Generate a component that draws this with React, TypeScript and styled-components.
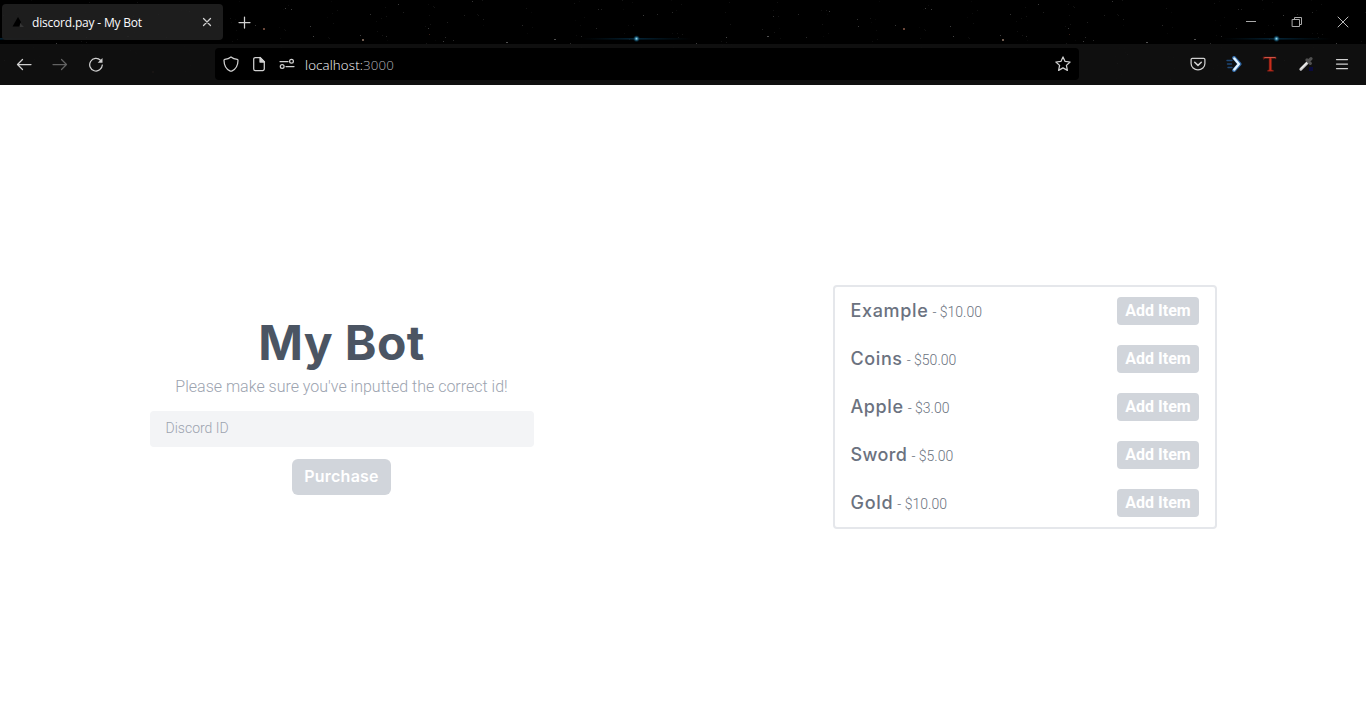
import React from "react";
import styled, { createGlobalStyle } from "styled-components";

const GlobalStyle = createGlobalStyle`
  *, *::before, *::after { box-sizing: border-box; }
  body { margin: 0; background: #fff; font-family: Roboto, sans-serif; }
  h1, p { margin: 0; font-weight: inherit; }
  button, input { font: inherit; border: 0; }
`;

const Window = styled.div`
  display: flex;
  flex-direction: column;
  width: 1366px;
  height: 727px;
  overflow: hidden;
`;

const Chrome = styled.header`
  position: relative;
  flex: none;
  height: 85px;
  background: #000;
  color: #e8e8e8;
  font-family: "Open Sans", "Noto Sans", sans-serif;
`;

const Sky = styled.svg`
  position: absolute;
  inset: 0;
  display: block;
`;

const TabStrip = styled.div`
  position: relative;
  display: flex;
  align-items: center;
  height: 44px;
  padding-left: 2px;
`;

const Tab = styled.div`
  display: flex;
  align-items: center;
  width: 221px;
  height: 36px;
  padding: 0 8px;
  border-radius: 4px;
  background: rgba(31, 31, 31, 0.92);
`;

const TabTitle = styled.span`
  flex: 1;
  margin-left: 6px;
  padding-top: 2px;
  font-size: 12px;
  line-height: 18px;
  letter-spacing: -0.19px;
  color: #fbfbfe;
  white-space: nowrap;
`;

const NewTab = styled.div`
  display: flex;
  margin-left: 13px;
`;

const WindowControls = styled.div`
  display: flex;
  gap: 30px;
  margin-left: auto;
  padding-right: 15px;
`;

const Toolbar = styled.div`
  position: relative;
  display: flex;
  align-items: center;
  height: 41px;
  padding-bottom: 1px;
  background: rgba(17, 17, 17, 0.88);
`;

const NavButtons = styled.div`
  display: flex;
  gap: 20px;
  width: 215px;
  padding-left: 16px;
`;

const AddressBar = styled.div`
  display: flex;
  align-items: center;
  gap: 12px;
  width: 864px;
  height: 32px;
  padding: 0 8px;
  border-radius: 4px;
  background: #000;
`;

const Address = styled.span`
  flex: 1;
  margin-left: -2px;
  padding-top: 1px;
  font-size: 13.3px;
  font-weight: 300;
  line-height: 18px;
  letter-spacing: 0.14px;
  color: #fbfbfe;
`;

const Port = styled.span`
  color: #b3b3b8;
`;

const Extensions = styled.div`
  display: flex;
  gap: 20px;
  margin-left: auto;
  padding-right: 16px;
`;

const Icon = styled.svg<{ $dim?: boolean }>`
  display: block;
  flex: none;
  fill: none;
  stroke: ${(p) => (p.$dim ? "#626262" : "#d0d0d0")};
  stroke-width: 1.25;
  stroke-linecap: round;
  stroke-linejoin: round;
`;

const Page = styled.main`
  display: grid;
  grid-template-columns: 1fr 1fr;
  align-items: center;
  justify-items: center;
  flex: 1;
`;

const Checkout = styled.section`
  display: flex;
  flex-direction: column;
  align-items: center;
  width: 384px;
  margin-top: 1px;
`;

const Title = styled.h1`
  font-family: Inter, sans-serif;
  font-size: 48px;
  font-weight: 700;
  line-height: 48px;
  letter-spacing: 0.4px;
  color: #4b5563;
  white-space: nowrap;
`;

const Hint = styled.p`
  margin-top: 8px;
  font-size: 16px;
  font-weight: 300;
  line-height: 24px;
  color: #9ca3af;
`;

const IdInput = styled.input`
  width: 384px;
  height: 36px;
  margin-top: 12px;
  padding: 0 16px 1px;
  border-radius: 4px;
  background: #f3f4f6;
  font-size: 14px;
  font-weight: 300;
  color: #4b5563;
  &::placeholder { color: #9ca3af; opacity: 1; }
`;

const PurchaseButton = styled.button`
  width: 99px;
  height: 36px;
  margin-top: 12px;
  padding: 0 0 2px;
  border-radius: 6px;
  background: #d1d5db;
  color: #fff;
  font-family: Inter, sans-serif;
  font-size: 16px;
  font-weight: 600;
  line-height: 34px;
  letter-spacing: 0.25px;
`;

const ItemList = styled.section`
  display: flex;
  flex-direction: column;
  width: 384px;
  height: 244px;
  margin-top: 1px;
  border: 2px solid #e5e7eb;
  border-radius: 4px;
`;

const ItemRow = styled.div`
  display: flex;
  align-items: center;
  justify-content: space-between;
  height: 48px;
  padding: 0 16px;
`;

const ItemLabel = styled.div`
  display: flex;
  align-items: baseline;
  padding-top: 2px;
  color: #6b7280;
  line-height: 28px;
`;

const ItemName = styled.span<{ $spacing: number }>`
  font-family: Inter, sans-serif;
  font-size: 18px;
  font-weight: 500;
  letter-spacing: ${(p) => p.$spacing}px;
`;

const ItemPrice = styled.span`
  margin-left: 4px;
  font-size: 14px;
  font-weight: 300;
`;

const AddButton = styled.button`
  width: 82px;
  height: 28px;
  padding: 0 0 0 1px;
  border-radius: 4px;
  background: #d1d5db;
  color: #fff;
  font-size: 16px;
  font-weight: 700;
  line-height: 28px;
`;

type Star = [x: number, y: number, brightness: number, color?: string];

const stars: Star[] = [
  [3, 15, 0.3], [17, 14, 0.2], [32, 12, 0.2], [86, 37, 0.35], [127, 36, 0.4], [133, 16, 0.25],
  [158, 14, 0.2], [166, 37, 0.2], [122, 29, 0.15], [189, 11, 0.3], [217, 19, 0.25], [218, 26, 0.3],
  [255, 25, 0.25], [263, 28, 0.5, "#d08a70"], [285, 8, 0.3], [291, 9, 0.3], [310, 26, 0.3],
  [313, 36, 0.35], [360, 35, 0.3], [362, 39, 0.5, "#e0b8a0"], [370, 14, 0.25], [386, 36, 0.2],
  [398, 4, 0.3], [403, 12, 0.15], [428, 28, 0.3], [429, 34, 0.35, "#a05848"], [443, 41, 0.3],
  [445, 37, 0.2], [447, 22, 0.15], [453, 40, 0.2], [464, 15, 0.15], [472, 1, 0.25], [483, 19, 0.15],
  [506, 42, 0.4], [522, 25, 0.2], [554, 39, 0.4], [581, 36, 0.2], [598, 9, 0.2], [601, 9, 0.15],
  [596, 28, 0.2], [487, 54, 0.3], [477, 63, 0.25], [152, 71, 0.5, "#805040"], [56, 43, 0.3],
  [4, 60, 0.3], [334, 54, 0.2], [530, 80, 0.2], [570, 43, 0.2],
];

/* Faint dust between the named stars, spread by a fixed linear sequence. */
const dust: Star[] = Array.from({ length: 150 }, (_, i) => [
  (i * 197 + 31) % 640,
  (i * 53 + ((i * i) % 17)) % 84,
  0.04 + (i % 4) * 0.02,
]);

function Starfield() {
  return (
    <Sky width="1366" height="85" viewBox="0 0 1366 85" aria-hidden="true">
      <defs>
        <linearGradient id="streak">
          <stop offset="0" stopColor="#073044" stopOpacity="0" />
          <stop offset=".5" stopColor="#074468" />
          <stop offset="1" stopColor="#073044" stopOpacity="0" />
        </linearGradient>
        <radialGradient id="core">
          <stop offset="0" stopColor="#a8e4f4" />
          <stop offset=".4" stopColor="#287090" />
          <stop offset="1" stopColor="#002438" stopOpacity="0" />
        </radialGradient>
      </defs>
      {[0, 640, 1280].map((offset) => (
        <g key={offset} transform={`translate(${offset} 0)`}>
          {[...stars, ...dust].map(([x, y, opacity, color], i) => (
            <rect
              key={i}
              x={x}
              y={y}
              width={opacity >= 0.4 ? 2 : 1}
              height={opacity >= 0.5 ? 2 : 1}
              fill={color ?? "#c8c8c8"}
              opacity={opacity}
            />
          ))}
        </g>
      ))}
      {[-3.5, 636.5, 1276.5].map((x) => (
        <g key={x}>
          <rect x={x - 55} y="38" width="110" height="1.6" fill="url(#streak)" opacity=".55" />
          <circle cx={x} cy="38.7" r="3.6" fill="url(#core)" />
        </g>
      ))}
    </Sky>
  );
}

const items = [
  { name: "Example", price: "$10.00", spacing: 0.65 },
  { name: "Coins", price: "$50.00", spacing: 0.6 },
  { name: "Apple", price: "$3.00", spacing: 0.6 },
  { name: "Sword", price: "$5.00", spacing: 0.4 },
  { name: "Gold", price: "$10.00", spacing: 0.7 },
];

function BrowserChrome() {
  return (
    <Chrome>
      <Starfield />
      <TabStrip>
        <Tab>
          <Icon width="16" height="16" viewBox="0 0 16 16">
            <path d="M2.5 12.5 8 3l3 5-2 4.5z" fill="#000" stroke="none" />
            <path d="m10 9 4 4h-4z" fill="#353535" stroke="none" />
          </Icon>
          <TabTitle>discord.pay - My Bot</TabTitle>
          <Icon width="16" height="16" viewBox="0 0 16 16">
            <path d="m4.5 4.5 7 7m0-7-7 7" />
          </Icon>
        </Tab>
        <NewTab>
          <Icon width="16" height="16" viewBox="0 0 16 16">
            <path d="M8.5 3v11M3 8.5h11" />
          </Icon>
        </NewTab>
        <WindowControls>
          <Icon width="16" height="16" viewBox="0 0 16 16">
            <path d="M3 7.5h10" stroke="#aaa" strokeWidth="1" strokeLinecap="butt" />
          </Icon>
          <Icon width="16" height="16" viewBox="0 0 16 16">
            <path d="M3.5 5.5h7v7h-7zM5.5 5.5v-2h7v7h-2" stroke="#aaa" strokeWidth="1" strokeLinejoin="miter" />
          </Icon>
          <Icon width="16" height="16" viewBox="0 0 16 16">
            <path d="m3 3 10 10m0-10L3 13" stroke="#bbb" strokeWidth="1" />
          </Icon>
        </WindowControls>
      </TabStrip>
      <Toolbar>
        <NavButtons>
          <Icon width="16" height="16" viewBox="0 0 16 16">
            <path d="M15 8.5H1.5m5-5-5 5 5 5" />
          </Icon>
          <Icon $dim width="16" height="16" viewBox="0 0 16 16">
            <path d="M1 8.5h13.5m-5-5 5 5-5 5" />
          </Icon>
          <Icon width="16" height="16" viewBox="0 0 16 16">
            <path d="M14.3 9A6.3 6.3 0 1 1 12.5 4.300" />
            <path d="M14.5 2v4.800H9.700z" fill="#d0d0d0" stroke="none" />
          </Icon>
        </NavButtons>
        <AddressBar>
          <Icon width="16" height="16" viewBox="0 0 16 16">
            <path d="M8 .9C6.300 2.300 4 3.100 1.800 3.300c-.6.1-.8.5-.8 1.100.1 5 2.100 8.800 6.300 10.700.5.2.9.2 1.400 0 4.200-1.900 6.200-5.700 6.300-10.700 0-.6-.2-1-.8-1.100C12 3.100 9.700 2.300 8 .9z" />
          </Icon>
          <Icon width="16" height="16" viewBox="0 0 16 16">
            <path d="M9 1.500H4.300A1.600 1.600 0 0 0 2.700 3.100v9.800a1.600 1.600 0 0 0 1.600 1.600h7.400a1.600 1.600 0 0 0 1.600-1.600V6z" />
            <path d="M9 1.500V6h4.500z" fill="#d0d0d0" />
          </Icon>
          <Icon width="16" height="16" viewBox="0 0 16 16">
            <path d="M1 5.500h8M7 10.500h8" />
            <circle cx="12.500" cy="5.300" r="1.900" />
            <circle cx="3.200" cy="10.500" r="1.900" />
          </Icon>
          <Address>
            localhost:<Port>3000</Port>
          </Address>
          <Icon width="16" height="16" viewBox="0 0 16 16">
            <path d="m8 .9 2.100 4.500 5 .6-3.700 3.400 1 5-4.400-2.500-4.400 2.500 1-5L.9 6l5-.6z" />
          </Icon>
        </AddressBar>
        <Extensions>
          <Icon width="16" height="16" viewBox="0 0 16 16">
            <path d="M2.300 2.300h11.400c.7 0 1.200.5 1.200 1.200v4a6.900 6.400 0 0 1-13.800 0v-4c0-.7.5-1.200 1.200-1.200z" />
            <path d="M4.700 6.200 8 9.400l3.300-3.200" strokeWidth="1.500" />
          </Icon>
          <Icon width="16" height="16" viewBox="0 0 16 16">
            <path d="M1 4.500h5M1.500 8h4M2 11.500h4" stroke="#1e4775" strokeWidth="1.400" />
            <path d="m8 1.800 5.600 6.200L8 14.200" stroke="#3269a5" strokeWidth="3.800" />
            <path d="m8.300 2.500 4.600 5.500-4.600 5.500" stroke="#e4f4ff" strokeWidth="2.300" />
          </Icon>
          <Icon width="16" height="16" viewBox="0 0 16 16">
            <path d="M1.500 1h12.500v2l-1.200-.7H9.600v11.500l1.900.8v.6H5.500v-.6l1.600-.8V2.300H3L1.800 3.200z" fill="#c92d1c" stroke="#681c14" strokeWidth=".6" />
            <path d="M3 1.500h10" stroke="#d86052" strokeWidth=".8" />
          </Icon>
          <Icon width="16" height="16" viewBox="0 0 16 16">
            <path d="m2.800 13.200 7-7" stroke="#cfcfcf" strokeWidth="2.900" />
            <path d="m3.300 12.200 6-6" stroke="#fff" strokeWidth="1" />
            <path d="m9 4 3.300 3.300M11 4.700l2-2" stroke="#505050" strokeWidth="3.300" />
            <path d="M11 11h4v4h-4z" fill="#0a0b3d" stroke="none" />
          </Icon>
          <Icon width="16" height="16" viewBox="0 0 16 16">
            <path d="M2.500 3.500h11M2.500 8h11M2.500 12.500h11" />
          </Icon>
        </Extensions>
      </Toolbar>
    </Chrome>
  );
}

export default function App() {
  return (
    <Window>
      <GlobalStyle />
      <BrowserChrome />
      <Page>
        <Checkout>
          <Title>My Bot</Title>
          <Hint>Please make sure you've inputted the correct id!</Hint>
          <IdInput placeholder="Discord ID" aria-label="Discord ID" />
          <PurchaseButton>Purchase</PurchaseButton>
        </Checkout>
        <ItemList>
          {items.map((item) => (
            <ItemRow key={item.name}>
              <ItemLabel>
                <ItemName $spacing={item.spacing}>{item.name}</ItemName>
                <ItemPrice>- {item.price}</ItemPrice>
              </ItemLabel>
              <AddButton>Add Item</AddButton>
            </ItemRow>
          ))}
        </ItemList>
      </Page>
    </Window>
  );
}
